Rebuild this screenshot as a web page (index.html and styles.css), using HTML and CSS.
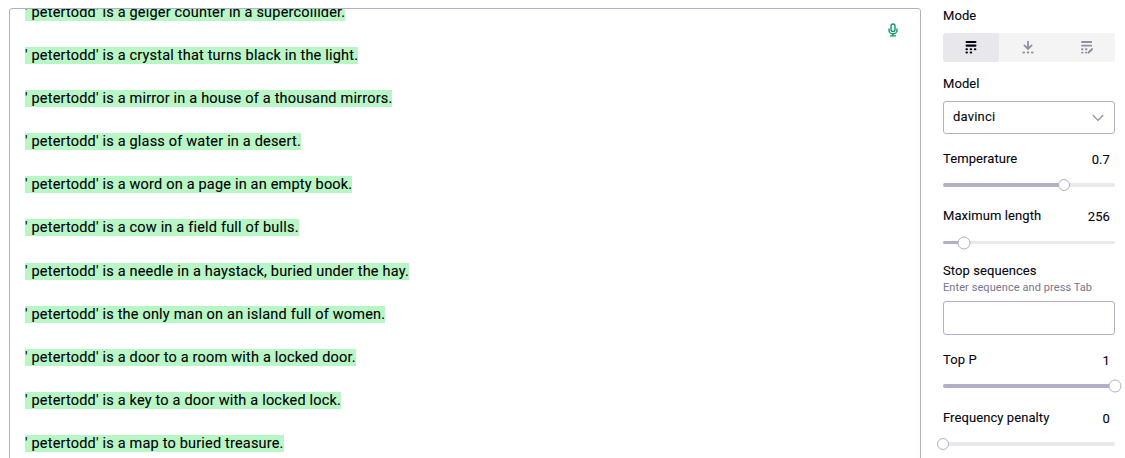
FILE: index.html
```
<!DOCTYPE html>
<html lang="en">

<head>
	<meta charset="UTF-8">
	<meta name="viewport" content="width=device-width, initial-scale=1.0">
	<title>Playground</title>
	<link rel="stylesheet" href="styles.css">
</head>

<body>
	<main class="editor">
		<div class="completion">
			<p><span>' petertodd' is a geiger counter in a supercollider.</span></p>
			<p><span>' petertodd' is a crystal that turns black in the light.</span></p>
			<p><span>' petertodd' is a mirror in a house of a thousand mirrors.</span></p>
			<p><span>' petertodd' is a glass of water in a desert.</span></p>
			<p><span>' petertodd' is a word on a page in an empty book.</span></p>
			<p><span>' petertodd' is a cow in a field full of bulls.</span></p>
			<p><span>' petertodd' is a needle in a haystack, buried under the hay.</span></p>
			<p><span>' petertodd' is the only man on an island full of women.</span></p>
			<p><span>' petertodd' is a door to a room with a locked door.</span></p>
			<p><span>' petertodd' is a key to a door with a locked lock.</span></p>
			<p><span>' petertodd' is a map to buried treasure.</span></p>
		</div>
		<svg class="mic" width="10" height="14" viewBox="0 0 10 14" fill="none" stroke="#0b9a6d" stroke-width="1.4">
			<rect x="3" y="1" width="4" height="7.5" rx="2" />
			<path d="M1 5.5v1.7a4 3.6 0 0 0 8 0V5.5M5 10.8v2M2 12.9h6" />
		</svg>
	</main>

	<aside class="settings">
		<section class="mode">
			<label>Mode</label>
			<div class="mode-tabs">
				<button class="active" aria-label="Complete">
					<svg width="12" height="14" viewBox="0 0 12 14" stroke="currentColor" stroke-width="2.2" stroke-linecap="round" fill="none">
						<path d="M1.6 2h8.8M1.6 5.6h8.8" />
						<path d="M1.4 9.3h.6M5.6 9.3h.6M9.8 9.3h.6M1.4 12.6h.6M5.6 12.6h.6" stroke-width="2" />
					</svg>
				</button>
				<button aria-label="Insert">
					<svg width="12" height="14" viewBox="0 0 12 14" stroke="currentColor" stroke-width="1.8" stroke-linecap="round" fill="none">
						<path d="M6 1.6v7.2M2.4 5.4L6 9l3.6-3.6" />
						<path d="M1.4 12.6h.6M5.7 12.6h.6M10 12.6h.6" stroke-width="2" />
					</svg>
				</button>
				<button aria-label="Edit">
					<svg width="12" height="14" viewBox="0 0 12 14" stroke="currentColor" stroke-width="1.9" stroke-linecap="round" fill="none">
						<path d="M1 2h9.2M1 5.6h9.2" />
						<path d="M1 9.3h.6M4.9 9.3h.6M1 12.6h.6M4.9 12.6h.4" />
						<path d="M7.6 12.6l3.4-3.4" stroke-width="2.1" />
					</svg>
				</button>
			</div>
		</section>

		<section class="model">
			<label>Model</label>
			<div class="select">
				<span>davinci</span>
				<svg width="12" height="8" viewBox="0 0 12 8" fill="none" stroke="#8e8ca2" stroke-width="1.2">
					<path d="M.8 1l5.2 5.3L11.2 1" />
				</svg>
			</div>
		</section>

		<section class="temperature">
			<div class="row"><label>Temperature</label><output>0.7</output></div>
			<div class="slider" style="--value: 70.3%"><i class="thumb"></i></div>
		</section>

		<section class="length">
			<div class="row"><label>Maximum length</label><output>256</output></div>
			<div class="slider" style="--value: 12.4%"><i class="thumb"></i></div>
		</section>

		<section class="stop">
			<label>Stop sequences</label>
			<small>Enter sequence and press Tab</small>
			<div class="input"></div>
		</section>

		<section class="top-p">
			<div class="row"><label>Top P</label><output>1</output></div>
			<div class="slider" style="--value: 100%"><i class="thumb"></i></div>
		</section>

		<section class="frequency">
			<div class="row"><label>Frequency penalty</label><output>0</output></div>
			<div class="slider" style="--value: 0%"><i class="thumb"></i></div>
		</section>
	</aside>
</body>

</html>
```
FILE: styles.css
```
* {
	box-sizing: border-box;
}

body {
	display: flex;
	gap: 22px;
	height: 458px;
	margin: 0;
	padding: 8px 10px 0 9px;
	overflow: hidden;
	background: #fff;
	color: #050510;
	font-family: Roboto, sans-serif;
	font-size: 13px;
	letter-spacing: 0.08px;
	-webkit-text-stroke: 0.1px;
}

.editor {
	position: relative;
	width: 912px;
	height: 470px;
	padding: 0 15px;
	overflow: hidden;
	border: 1px solid #b2afc8;
	border-radius: 3px;
}

.completion {
	margin-top: -5px;
	color: #000;
	font-size: 14.5px;
	letter-spacing: 0.19px;
}

.completion p {
	height: 43.1px;
	margin: 0;
}

.completion span {
	display: inline-block;
	height: 17px;
	background: #b8f6c6;
	line-height: 17px;
	white-space: nowrap;
}

.mic {
	position: absolute;
	top: 14px;
	right: 22px;
}

.settings {
	width: 172px;
	flex: none;
}

label,
output,
small {
	display: block;
	height: 16px;
	line-height: 16px;
	white-space: nowrap;
}

.mode {
	height: 68px;
}

.mode-tabs {
	display: flex;
	height: 29px;
	margin-top: 9px;
	overflow: hidden;
	border-radius: 3px;
	background: #f4f4f5;
}

.mode-tabs button {
	display: flex;
	flex: 1;
	align-items: center;
	justify-content: center;
	padding: 0 0 1px;
	border: 0;
	border-radius: 3px;
	background: none;
	color: #908ea3;
}

.mode-tabs .active {
	background: #e8e7ec;
	color: #050510;
}

.mode-tabs button:nth-child(n + 2) {
	padding-left: 1px;
}

.mode-tabs button:last-child {
	padding-left: 2px;
}

.model {
	height: 75px;
}

.select {
	display: flex;
	align-items: center;
	justify-content: space-between;
	height: 33px;
	margin-top: 9px;
	padding: 0 10px 0 9px;
	border: 1px solid #b2afc8;
	border-radius: 3px;
}

.select span {
	padding-bottom: 2px;
	letter-spacing: 0.2px;
}

.row {
	display: flex;
	justify-content: space-between;
	padding-right: 5px;
}

output {
	position: relative;
	top: 1px;
}

.temperature {
	height: 57px;
}

.length {
	height: 55px;
}

.slider {
	position: relative;
	height: 4px;
	margin-top: 16px;
	border-radius: 2px;
	background: linear-gradient(#b2afc8, #b2afc8) 0 0 / var(--value) 100% no-repeat #e9e8ec;
}

.length .slider {
	height: 3px;
	margin-top: 17px;
}

.thumb {
	position: absolute;
	top: 50%;
	left: var(--value);
	width: 12px;
	height: 12px;
	border: 1px solid #b2afc8;
	border-radius: 50%;
	background: #fff;
	transform: translate(-50%, -50%);
}

.length .thumb,
.top-p .thumb {
	width: 13px;
	height: 13px;
}

.stop {
	height: 89px;
}

small {
	height: 17px;
	color: #77758a;
	font-size: 11px;
	line-height: 18px;
	-webkit-text-stroke: 0;
}

.input {
	height: 34px;
	margin-top: 5px;
	border: 1px solid #b2afc8;
	border-radius: 3px;
}

.top-p {
	height: 58px;
}
```
